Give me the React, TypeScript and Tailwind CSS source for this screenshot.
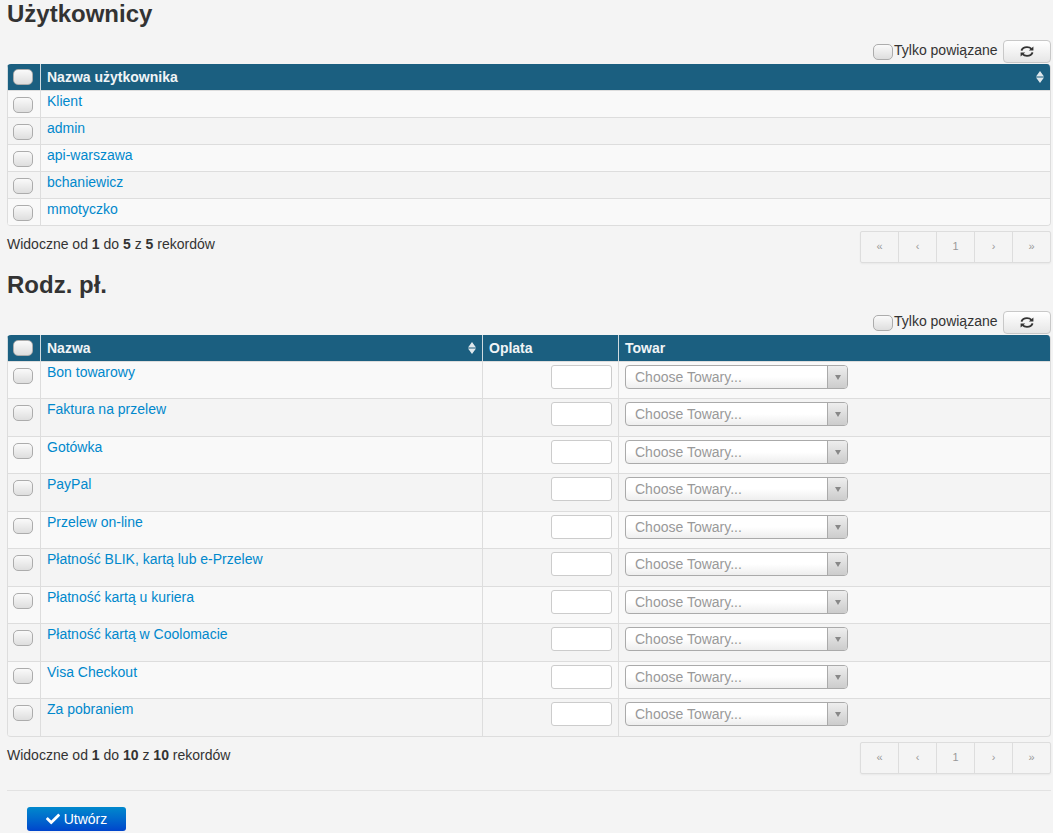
import { ReactNode } from "react";
import { FaCheck } from "react-icons/fa";

const users = ["Klient", "admin", "api-warszawa", "bchaniewicz", "mmotyczko"];

const payments = [
  "Bon towarowy",
  "Faktura na przelew",
  "Gotówka",
  "PayPal",
  "Przelew on-line",
  "Płatność BLIK, kartą lub e-Przelew",
  "Płatność kartą u kuriera",
  "Płatność kartą w Coolomacie",
  "Visa Checkout",
  "Za pobraniem",
];

const th = "h-[26px] border-l border-[#d0dbe0] bg-[#1b5f80] py-0 pr-1.5 text-left align-middle font-bold text-[#f0f4f6]";
const td = "border-t border-l border-[#ddd] py-0 pr-1.5 align-top";

function Checkbox({ id, label }: { id?: string; label?: string }) {
  return (
    <input
      id={id}
      type="checkbox"
      aria-label={label}
      className="block h-4 w-5 shrink-0 appearance-none rounded-[5px] border border-[#acacac] bg-linear-to-b from-[#fafafa] to-[#dedede] checked:border-[#0088cc] checked:to-[#9fd3ee]"
    />
  );
}

function SortIcon() {
  return (
    <svg viewBox="0 0 8 12" className="h-3 w-2 shrink-0 fill-[#dfe8ec]" aria-hidden="true">
      <path d="M4 0 8 5.4H0ZM0 6.6H8L4 12Z" />
    </svg>
  );
}

function RefreshIcon() {
  return (
    <svg viewBox="0 0 14 11" className="h-[11px] w-3.5" aria-hidden="true">
      <path
        d="M1.4 4.6C2.2 2.3 4.3 1.1 7 1.1c2 0 3.4.6 4.5 1.7M12.6 6.4C11.8 8.7 9.7 9.9 7 9.9c-2 0-3.4-.6-4.5-1.7"
        fill="none"
        stroke="currentColor"
        strokeWidth="1.8"
      />
      <path d="M13.4.6v4H8.8ZM.6 10.4v-4h4.6Z" fill="currentColor" />
    </svg>
  );
}

function SortButton({ children }: { children: ReactNode }) {
  return (
    <button type="button" className="flex w-full items-center justify-between font-bold">
      {children}
      <SortIcon />
    </button>
  );
}

function Pagination() {
  return (
    <nav aria-label="Strony" className="flex h-8 w-[191px] rounded-xs border border-[#ddd] text-[11px] text-[#999] shadow-xs">
      {["«", "‹", "1", "›", "»"].map((p) => (
        <a key={p} href="#" className="flex flex-1 items-center justify-center border-l border-[#ddd] first:border-l-0">
          {p}
        </a>
      ))}
    </nav>
  );
}

interface SectionProps {
  id: string;
  title: string;
  count: number;
  children: ReactNode;
}

function Section({ id, title, count, children }: SectionProps) {
  return (
    <section>
      <h2 className="mb-3 text-2xl leading-7 font-bold">{title}</h2>
      <div className="flex h-6 items-start justify-end">
        <div className="pt-1">
          <Checkbox id={id} />
        </div>
        <label htmlFor={id} className="min-w-[110px] pl-px leading-5">
          Tylko powiązane
        </label>
        <button
          type="button"
          aria-label="Odśwież"
          className="flex h-[23px] w-12 items-center justify-center rounded border border-[#c8c8c8] bg-linear-to-b from-white to-[#e6e6e6]"
        >
          <RefreshIcon />
        </button>
      </div>
      {children}
      <div className="mt-[5px] flex h-10 items-start justify-between">
        <p className="pt-[3px] leading-5">
          Widoczne od <b>1</b> do <b>{count}</b> z <b>{count}</b> rekordów
        </p>
        <Pagination />
      </div>
    </section>
  );
}

function UsersTable() {
  return (
    <table className="w-full table-fixed border-separate border-spacing-0 overflow-hidden rounded border-r border-b border-[#ddd]">
      <thead>
        <tr>
          <th className={`${th} w-[33px] pl-[5px]`}>
            <Checkbox label="Zaznacz wszystkich użytkowników" />
          </th>
          <th className={`${th} pl-1.5`}>
            <SortButton>Nazwa użytkownika</SortButton>
          </th>
        </tr>
      </thead>
      <tbody>
        {users.map((name) => (
          <tr key={name} className="h-[27px] odd:bg-[#f9f9f9]">
            <td className={`${td} pt-1.5 pl-[5px]`}>
              <Checkbox label={name} />
            </td>
            <td className={`${td} pl-1.5`}>
              <a href="#" className="block leading-5 text-[#0088cc]">
                {name}
              </a>
            </td>
          </tr>
        ))}
      </tbody>
    </table>
  );
}

function PaymentsTable() {
  return (
    <table className="w-full table-fixed border-separate border-spacing-0 overflow-hidden rounded border-r border-b border-[#ddd]">
      <thead>
        <tr>
          <th className={`${th} w-[33px] pl-[5px]`}>
            <Checkbox label="Zaznacz wszystkie rodzaje płatności" />
          </th>
          <th className={`${th} pl-1.5`}>
            <SortButton>Nazwa</SortButton>
          </th>
          <th className={`${th} w-34 pl-1.5`}>Oplata</th>
          <th className={`${th} w-108 pl-1.5`}>Towar</th>
        </tr>
      </thead>
      <tbody>
        {payments.map((name) => (
          <tr key={name} className="h-[37px] odd:bg-[#f9f9f9] even:h-[38px]">
            <td className={`${td} pt-1.5 pl-[5px]`}>
              <Checkbox label={name} />
            </td>
            <td className={`${td} pl-1.5`}>
              <a href="#" className="block leading-5 text-[#0088cc]">
                {name}
              </a>
            </td>
            <td className={`${td} pt-[3px] pl-1.5`}>
              <input
                type="text"
                aria-label={`Oplata: ${name}`}
                className="ml-auto block h-6 w-[61px] rounded-[3px] border border-[#ccc] bg-white px-1"
              />
            </td>
            <td className={`${td} pt-[3px] pl-1.5`}>
              <div className="relative w-[223px]">
                <select
                  aria-label={`Towar: ${name}`}
                  className="block h-6 w-full appearance-none rounded border border-[#aaa] bg-linear-to-b from-white from-50% to-[#eee] pr-6 pl-[9px] text-[#999]"
                >
                  <option>Choose Towary...</option>
                </select>
                <span className="pointer-events-none absolute inset-y-px right-px flex w-5 items-center justify-center rounded-r-[3px] border-l border-[#aaa] bg-linear-to-b from-[#eee] to-[#ccc]">
                  <svg viewBox="0 0 6 5" className="h-[5px] w-1.5 fill-[#888]" aria-hidden="true">
                    <path d="M0 0H6L3 5Z" />
                  </svg>
                </span>
              </div>
            </td>
          </tr>
        ))}
      </tbody>
    </table>
  );
}

export default function App() {
  return (
    <main className="min-h-screen bg-[#f4f4f4] pr-0.5 pl-[7px] font-['Liberation_Sans',Arial,sans-serif] text-sm text-[#333]">
      <Section id="users-related" title="Użytkownicy" count={users.length}>
        <UsersTable />
      </Section>
      <Section id="payments-related" title="Rodz. pł." count={payments.length}>
        <PaymentsTable />
      </Section>
      <hr className="mt-2 border-[#e2e2e2]" />
      <button
        type="button"
        className="mt-4 ml-5 flex h-6 w-[99px] items-center justify-center gap-1 rounded-[3px] bg-linear-to-b from-[#0088cc] to-[#0044cc] text-white"
      >
        <FaCheck className="size-3.5" />
        Utwórz
      </button>
    </main>
  );
}
